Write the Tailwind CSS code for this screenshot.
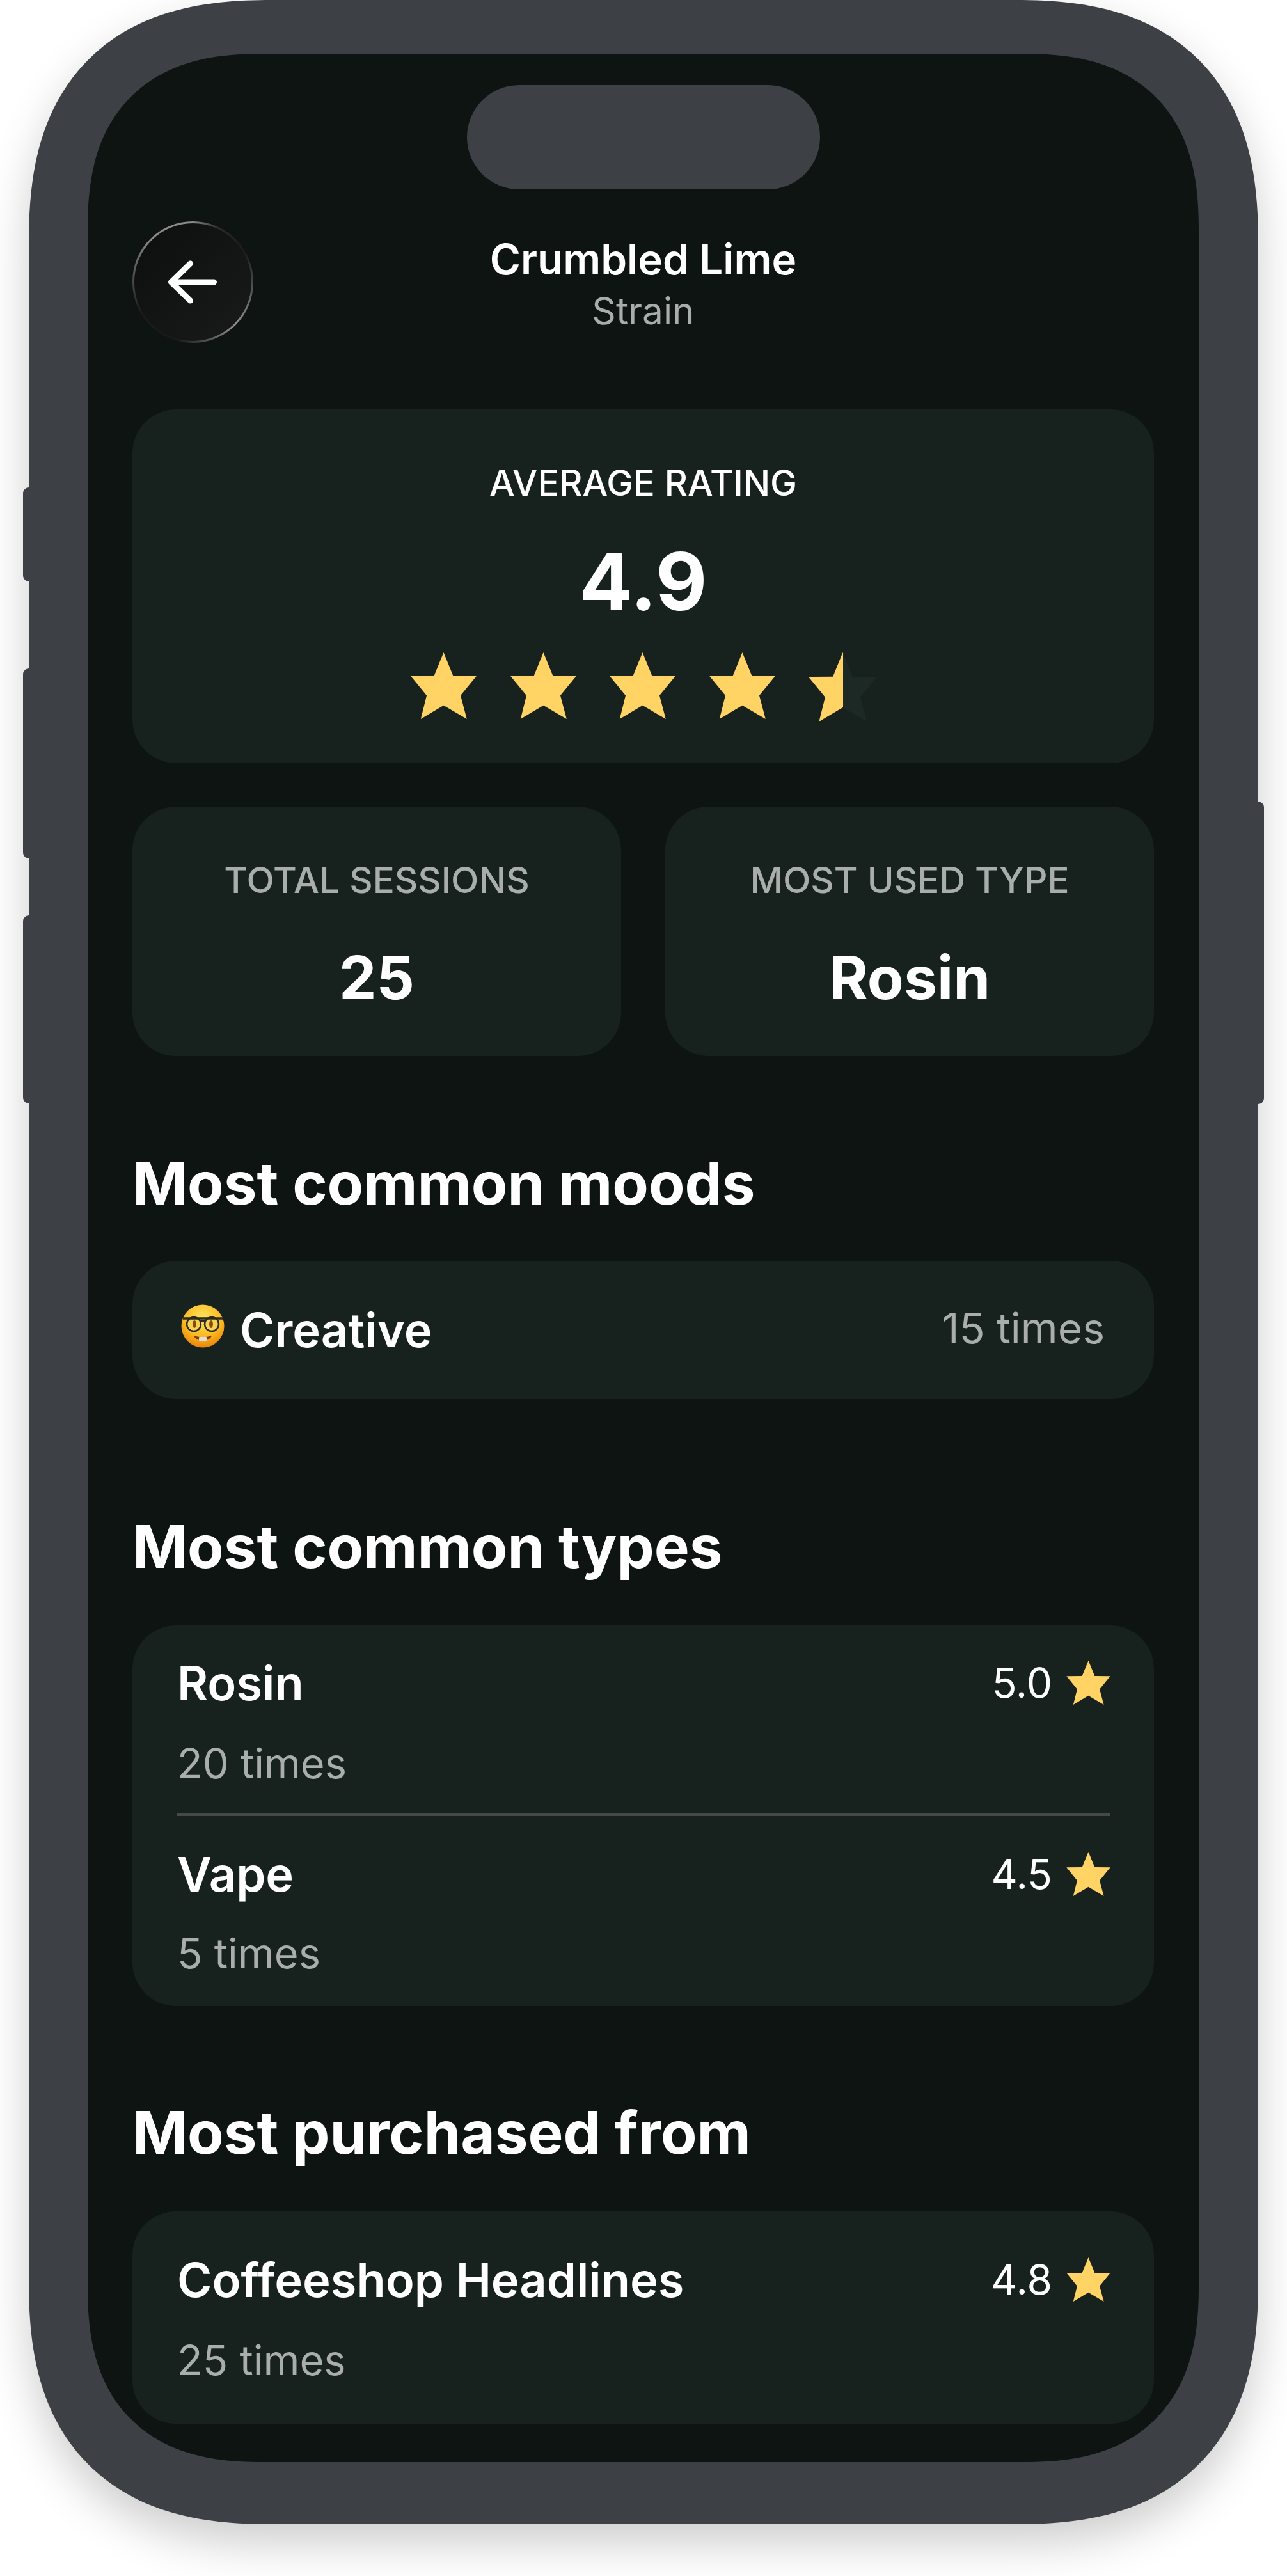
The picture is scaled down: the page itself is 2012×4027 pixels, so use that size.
<!DOCTYPE html>
<html lang="en">
<head>
<meta charset="UTF-8">
<script src="https://cdn.jsdelivr.net/npm/@tailwindcss/browser@4"></script>
<title>Crumbled Lime</title>
</head>
<body class="bg-white font-['Inter',sans-serif]">
<svg class="hidden">
  <symbol id="star" viewBox="0 0 103 104"><polygon fill="#ffd465" points="51.5,0 36.7,36.3 0,36.7 25,67.3 15.8,104 51.5,82.7 87.8,104 78,67.3 103,36.7 66.3,36.3"/></symbol>
</svg>
<div class="w-[2012px] h-[4027px] overflow-hidden pl-[45px]">
  <!-- phone frame -->
  <div class="relative w-[1922px] h-[3946px] rounded-[380px] [corner-shape:superellipse(1.3)] bg-[#3d4045] pt-[84px] pl-[92px] pr-[93px] pb-[97px] shadow-[0_30px_70px_rgba(0,0,0,0.2)]">
    <div class="absolute left-[-9px] top-[762px] w-[12px] h-[147px] rounded-l-[9px] bg-[#3d4045]"></div>
    <div class="absolute left-[-9px] top-[1045px] w-[12px] h-[297px] rounded-l-[9px] bg-[#3d4045]"></div>
    <div class="absolute left-[-9px] top-[1431px] w-[12px] h-[294px] rounded-l-[9px] bg-[#3d4045]"></div>
    <div class="absolute right-[-9px] top-[1253px] w-[12px] h-[473px] rounded-r-[9px] bg-[#3d4045]"></div>

    <!-- screen -->
    <div class="relative h-full rounded-[275px] [corner-shape:superellipse(1.3)] bg-[#0e1412] overflow-hidden px-[70px] pt-[262px] text-white">
      <div class="absolute left-[593px] top-[49px] w-[552px] h-[163px] rounded-full bg-[#3d4045]"></div>

      <!-- header -->
      <div class="flex h-[190px]">
        <div class="w-[189px] h-[190px] rounded-full p-[3px] bg-[conic-gradient(#8a8a8a_0deg,#2a2a2a_25deg,#1a1a1a_60deg,#8f8f8f_135deg,#1a1a1a_195deg,#1a1a1a_240deg,#8a8a8a_315deg,#8a8a8a_360deg)]">
          <div class="w-full h-full rounded-full bg-gradient-to-br from-[#0d0e0e] to-[#191a1a] flex items-center justify-center">
            <svg class="w-[88px] h-[76px]" viewBox="0 0 88 76" fill="none" stroke="#fff" stroke-width="9" stroke-linecap="round" stroke-linejoin="round"><path d="M76.5 38H9.5M39.5 9L9.5 38l30 29"/></svg>
          </div>
        </div>
        <div class="flex-1 text-center">
          <div class="h-[76px] mt-[22px] text-[65.5px] leading-[76px] font-semibold">Crumbled Lime</div>
          <div class="h-[64px] mt-[10px] text-[58.5px] leading-[64px] text-[#a9adab]">Strain</div>
        </div>
        <div class="w-[189px]"></div>
      </div>

      <!-- average rating -->
      <div class="mt-[104px] h-[553px] rounded-[68px] bg-[#17211d] flex flex-col items-center">
        <div class="mt-[85px] h-[60px] text-[56px] leading-[60px] font-medium">AVERAGE RATING</div>
        <div class="mt-[60px] h-[128px] text-[124px] leading-[128px] font-bold">4.9</div>
        <div class="mt-[47px] w-[727px] flex items-start gap-[52.5px]">
          <svg class="w-[103px] h-[104px] shrink-0"><use href="#star"/></svg>
          <svg class="w-[103px] h-[104px] shrink-0"><use href="#star"/></svg>
          <svg class="w-[103px] h-[104px] shrink-0"><use href="#star"/></svg>
          <svg class="w-[103px] h-[104px] shrink-0"><use href="#star"/></svg>
          <svg class="w-[107px] h-[107px] shrink-0" viewBox="0 0 103 103">
            <defs><clipPath id="half"><rect x="0" y="0" width="52" height="104"/></clipPath></defs>
            <polygon fill="#1c2925" points="51.5,0 36.7,36.3 0,36.7 25,67.3 15.8,104 51.5,82.7 87.8,104 78,67.3 103,36.7 66.3,36.3"/>
            <polygon fill="#ffd465" clip-path="url(#half)" points="51.5,0 36.7,36.3 0,36.7 25,67.3 15.8,104 51.5,82.7 87.8,104 78,67.3 103,36.7 66.3,36.3"/>
          </svg>
        </div>
      </div>

      <!-- stats -->
      <div class="mt-[68px] flex gap-[69px]">
        <div class="flex-1 h-[390px] rounded-[68px] bg-[#17211d] flex flex-col items-center">
          <div class="mt-[85px] h-[60px] text-[56.5px] leading-[60px] font-medium text-[#a9adab]">TOTAL SESSIONS</div>
          <div class="mt-[68px] h-[108px] text-[93px] leading-[108px] font-bold">25</div>
        </div>
        <div class="flex-1 h-[390px] rounded-[68px] bg-[#17211d] flex flex-col items-center">
          <div class="mt-[85px] h-[60px] text-[56.5px] leading-[60px] font-medium text-[#a9adab]">MOST USED TYPE</div>
          <div class="mt-[68px] h-[108px] text-[93px] leading-[108px] font-bold">Rosin</div>
        </div>
      </div>

      <!-- moods -->
      <h2 class="mt-[148px] h-[100px] text-[92.4px] leading-[100px] font-bold">Most common moods</h2>
      <div class="mt-[72px] h-[216px] rounded-[68px] bg-[#17211d] pl-[76px] pr-[77px] flex items-center justify-between">
        <div class="flex items-center gap-[24px]">
          <svg class="w-[68px] h-[68px] -mt-[12px]" viewBox="0 0 68 68">
            <defs><radialGradient id="face" cx="50%" cy="30%" r="75%"><stop offset="0" stop-color="#ffe25c"/><stop offset="0.6" stop-color="#fcb81f"/><stop offset="1" stop-color="#e87a08"/></radialGradient></defs>
            <circle cx="34" cy="34" r="33.5" fill="url(#face)"/>
            <circle cx="20" cy="31" r="11" fill="#f5d34f" stroke="#2b2a25" stroke-width="2.5"/>
            <circle cx="48" cy="31" r="11" fill="#f5d34f" stroke="#2b2a25" stroke-width="2.5"/>
            <path d="M3 22h62M30 27c3-2 5-2 8 0" fill="none" stroke="#2b2a25" stroke-width="3.5"/>
            <ellipse cx="21" cy="31" rx="3" ry="6" fill="#8a4b08"/>
            <ellipse cx="47" cy="31" rx="3" ry="6" fill="#8a4b08"/>
            <path d="M20 49c9 3 19 3 28 0-3 10-25 10-28 0z" fill="#7a3d06"/>
            <rect x="28" y="51" width="12" height="6" rx="1" fill="#dedede"/>
          </svg>
          <span class="text-[74px] leading-[88px] font-semibold">Creative</span>
        </div>
        <span class="text-[66px] leading-[76px] -mt-[6px] text-[#a9adab]">15 times</span>
      </div>

      <!-- types -->
      <h2 class="mt-[180px] h-[100px] text-[92.4px] leading-[100px] font-bold">Most common types</h2>
      <div class="mt-[74px] h-[595px] rounded-[68px] bg-[#17211d] pl-[70px] pr-[68px]">
        <div class="h-[298px] border-b-[4px] border-[#454a48] pt-[46px]">
          <div class="flex justify-between items-center h-[88px]">
            <span class="text-[74px] leading-[88px] font-semibold">Rosin</span>
            <span class="flex items-center gap-[22px] text-[64px] leading-[88px]">5.0 <svg class="w-[69px] h-[69px] -mt-[2px]"><use href="#star"/></svg></span>
          </div>
          <div class="mt-[44px] h-[76px] text-[65px] leading-[76px] text-[#a9adab]">20 times</div>
        </div>
        <div class="pt-[47px]">
          <div class="flex justify-between items-center h-[88px]">
            <span class="text-[74px] leading-[88px] font-semibold">Vape</span>
            <span class="flex items-center gap-[22px] text-[64px] leading-[88px]">4.5 <svg class="w-[69px] h-[69px] -mt-[2px]"><use href="#star"/></svg></span>
          </div>
          <div class="mt-[42px] h-[76px] text-[65px] leading-[76px] text-[#a9adab]">5 times</div>
        </div>
      </div>

      <!-- purchased -->
      <h2 class="mt-[147px] h-[100px] text-[92.4px] leading-[100px] font-bold">Most purchased from</h2>
      <div class="mt-[74px] h-[332px] rounded-[68px] bg-[#17211d] pl-[70px] pr-[68px] pt-[63px]">
        <div class="flex justify-between items-center h-[88px]">
          <span class="text-[74px] leading-[88px] font-semibold">Coffeeshop Headlines</span>
          <span class="flex items-center gap-[22px] text-[64px] leading-[88px]">4.8 <svg class="w-[69px] h-[69px] -mt-[2px]"><use href="#star"/></svg></span>
        </div>
        <div class="mt-[44px] h-[76px] text-[65px] leading-[76px] text-[#a9adab]">25 times</div>
      </div>
    </div>
  </div>
</div>
</body>
</html>
